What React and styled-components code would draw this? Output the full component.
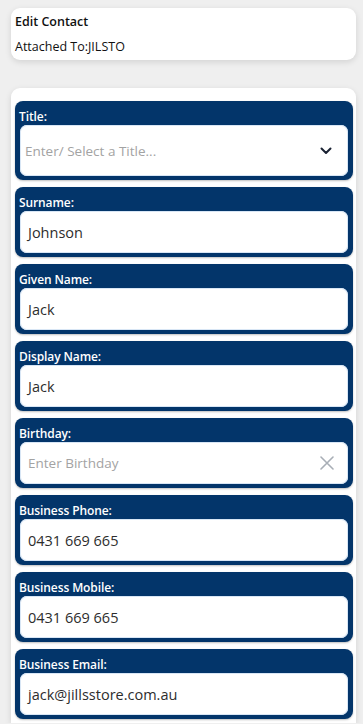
import React from "react";
import styled, { createGlobalStyle } from "styled-components";

const GlobalStyle = createGlobalStyle`
  html, body {
    margin: 0;
    padding: 0;
    background: #efefef;
    font-family: "Open Sans", "Liberation Sans", sans-serif;
  }
`;

const Page = styled.div`
  padding: 8px 7px 0 11px;
  display: flex;
  flex-direction: column;
  gap: 28px;
`;

const HeaderCard = styled.div`
  background: #ffffff;
  border-radius: 9px;
  box-shadow: 0 2px 6px rgba(0, 0, 0, 0.12);
  padding: 6px 4px 5px 4px;
  height: 41px;
  display: flex;
  flex-direction: column;
  justify-content: space-between;
  font-size: 12.5px;
  color: #111;
`;

const HeaderTitle = styled.div`
  font-weight: 600;
  line-height: 16px;
`;

const HeaderLine = styled.div`
  line-height: 16px;
`;

const FormCard = styled.div`
  background: #ffffff;
  border-radius: 9px 9px 0 0;
  box-shadow: 0 2px 6px rgba(0, 0, 0, 0.12);
  padding: 13px 3px 4px 4px;
  display: flex;
  flex-direction: column;
  gap: 7px;
`;

const Field = styled.div`
  background: #03356a;
  border-radius: 8px;
  padding: 0 5px 4px 5px;
  display: flex;
  flex-direction: column;
  box-shadow: 0 1px 2px rgba(0, 0, 0, 0.25);
`;

const Label = styled.div`
  color: #ffffff;
  font-size: 12px;
  font-weight: 600;
  letter-spacing: -0.1px;
  height: 24px;
  line-height: 31px;
  margin-left: -1px;
`;

const InputBox = styled.div`
  background: #ffffff;
  border-radius: 7px;
  height: ${(p) => (p.$tall ? "51px" : "42px")};
  display: flex;
  align-items: center;
  justify-content: space-between;
  padding: 0 9px 0 ${(p) => p.$pl || "8px"};
  box-shadow: inset 0 0 0 1px #d8e6f5;
  color: ${(p) => (p.$placeholder ? "#a3a3a3" : "#2d2d2d")};
  font-size: ${(p) => (p.$placeholder ? "13.5px" : "14.5px")};
`;

const IconWrap = styled.span`
  display: flex;
  align-items: center;
  margin-right: ${(p) => p.$mr || "0px"};
`;

const Chevron = () => (
  <svg width="12" height="8" viewBox="0 0 12 8">
    <path d="M1.5 1.5 L6 6 L10.5 1.5" fill="none" stroke="#1a2233" strokeWidth="2" strokeLinecap="round" strokeLinejoin="round" />
  </svg>
);

const Cross = () => (
  <svg width="14" height="14" viewBox="0 0 14 14">
    <path d="M1 1 L13 13 M13 1 L1 13" fill="none" stroke="#a8aeb6" strokeWidth="1.6" strokeLinecap="round" />
  </svg>
);

const fields = [
  { label: "Surname:", value: "Johnson" },
  { label: "Given Name:", value: "Jack" },
  { label: "Display Name:", value: "Jack" },
];

const fields2 = [
  { label: "Business Phone:", value: "0431 669 665" },
  { label: "Business Mobile:", value: "0431 669 665" },
  { label: "Business Email:", value: "jack@jillsstore.com.au" },
];

export default function App() {
  return (
    <>
      <GlobalStyle />
      <Page>
        <HeaderCard>
          <HeaderTitle>Edit Contact</HeaderTitle>
          <HeaderLine>Attached To:JILSTO</HeaderLine>
        </HeaderCard>
        <FormCard>
          <Field>
            <Label>Title:</Label>
            <InputBox $tall $placeholder $pl="5px">
              <span>Enter/ Select a Title...</span>
              <IconWrap $mr="7px">
                <Chevron />
              </IconWrap>
            </InputBox>
          </Field>
          {fields.map((f) => (
            <Field key={f.label}>
              <Label>{f.label}</Label>
              <InputBox>{f.value}</InputBox>
            </Field>
          ))}
          <Field>
            <Label>Birthday:</Label>
            <InputBox $placeholder>
              <span>Enter Birthday</span>
              <IconWrap $mr="5px">
                <Cross />
              </IconWrap>
            </InputBox>
          </Field>
          {fields2.map((f) => (
            <Field key={f.label}>
              <Label>{f.label}</Label>
              <InputBox>{f.value}</InputBox>
            </Field>
          ))}
        </FormCard>
      </Page>
    </>
  );
}
